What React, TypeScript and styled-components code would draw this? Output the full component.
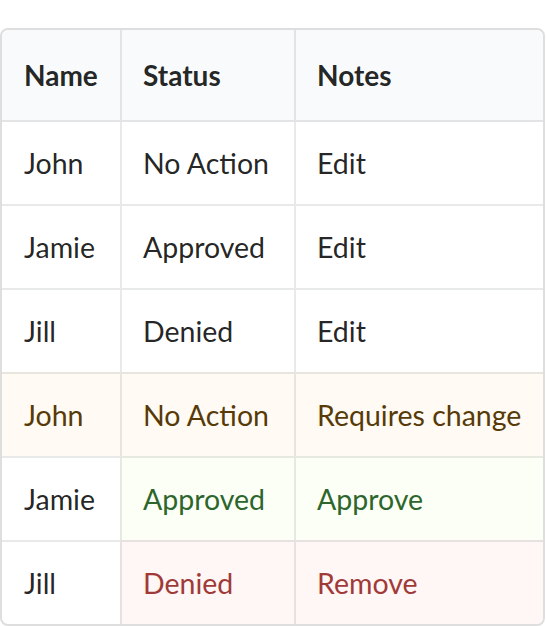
import React from "react";
import styled, { createGlobalStyle, css } from "styled-components";

const Global = createGlobalStyle`
  html, body { margin: 0; padding: 0; background: #fff; }
  body { font-family: Lato, "Helvetica Neue", Arial, sans-serif; }
`;

type Tone = "warning" | "positive" | "negative" | undefined;

const toneStyles = {
  warning: css`background: #fffaf3; color: #573a08;`,
  positive: css`background: #fcfff5; color: #2c662d;`,
  negative: css`background: #fff6f6; color: #9f3a38;`,
};

const Page = styled.div`
  padding: 28px 0 0 0;
`;

const Table = styled.table`
  width: 545px;
  table-layout: fixed;
  border-collapse: separate;
  border-spacing: 0;
  border: 2px solid rgba(34, 36, 38, 0.15);
  border-radius: 8px;
  font-family: Lato, "Helvetica Neue", Arial, sans-serif;
  font-size: 28px;
  line-height: 40px;
  color: rgba(0, 0, 0, 0.87);
  text-align: left;
  overflow: hidden;
`;

const Col = styled.col<{ $w: number }>`
  width: ${(p) => p.$w}px;
`;

const HeadCell = styled.th`
  background: #f9fafb;
  font-weight: 700;
  padding: 25px 21px 25px 22px;
  border-bottom: 2px solid rgba(34, 36, 38, 0.1);
  &:not(:first-child) { border-left: 2px solid rgba(34, 36, 38, 0.1); padding-left: 21px; }
  &:first-child { border-top-left-radius: 6px; }
  &:last-child { border-top-right-radius: 6px; }
`;

const Row = styled.tr<{ $tone?: Tone }>`
  ${(p) => (p.$tone ? toneStyles[p.$tone] : "")}
  &:not(:first-child) > td { border-top: 2px solid rgba(34, 36, 38, 0.1); }
`;

const Cell = styled.td<{ $tone?: Tone }>`
  padding: 21px 21px 21px 22px;
  font-size: 28.5px;
  font-weight: 400;
  white-space: nowrap;
  ${(p) => (p.$tone ? toneStyles[p.$tone] : "")}
  &:not(:first-child) { border-left: 2px solid rgba(34, 36, 38, 0.1); padding-left: 21px; }
`;

type RowData = { cells: [string, string, string]; row?: Tone; cellTones?: Tone[] };

const rows: RowData[] = [
  { cells: ["John", "No Action", "Edit"] },
  { cells: ["Jamie", "Approved", "Edit"] },
  { cells: ["Jill", "Denied", "Edit"] },
  { cells: ["John", "No Action", "Requires change"], row: "warning" },
  { cells: ["Jamie", "Approved", "Approve"], cellTones: [undefined, "positive", "positive"] },
  { cells: ["Jill", "Denied", "Remove"], cellTones: [undefined, "negative", "negative"] },
];

export default function App() {
  return (
    <Page>
      <Global />
      <Table>
        <colgroup>
          <Col $w={118} />
          <Col $w={174} />
          <Col $w={249} />
        </colgroup>
        <thead>
          <tr>
            <HeadCell>Name</HeadCell>
            <HeadCell>Status</HeadCell>
            <HeadCell>Notes</HeadCell>
          </tr>
        </thead>
        <tbody>
          {rows.map((r, i) => (
            <Row key={i} $tone={r.row}>
              {r.cells.map((c, j) => (
                <Cell key={j} $tone={r.cellTones?.[j]}>
                  {c}
                </Cell>
              ))}
            </Row>
          ))}
        </tbody>
      </Table>
    </Page>
  );
}
